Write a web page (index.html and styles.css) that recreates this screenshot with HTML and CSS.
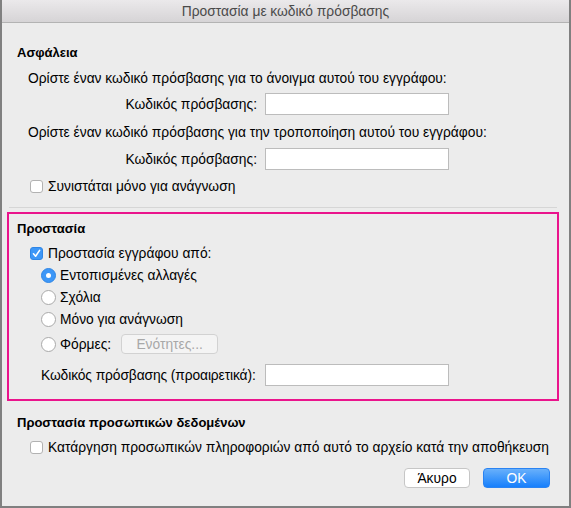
FILE: index.html
```html
<!DOCTYPE html>
<html lang="el">
<head>
  <meta charset="UTF-8" />
  <meta name="viewport" content="width=device-width, initial-scale=1.0" />
  <title>Προστασία με κωδικό πρόσβασης</title>
  <link rel="stylesheet" href="styles.css">
</head>
<body>
  <div class="window">
    <div class="titlebar">Προστασία με κωδικό πρόσβασης</div>

    <div class="content">
      <div class="heading first">Ασφάλεια</div>
      <div class="line indent">Ορίστε έναν κωδικό πρόσβασης για το άνοιγμα αυτού του εγγράφου:</div>
      <div class="pwd-row">
        <label class="pwd-label">Κωδικός πρόσβασης:</label>
        <input class="field" type="password" />
      </div>
      <div class="line indent second">Ορίστε έναν κωδικό πρόσβασης για την τροποποίηση αυτού του εγγράφου:</div>
      <div class="pwd-row pwd-second">
        <label class="pwd-label">Κωδικός πρόσβασης:</label>
        <input class="field" type="password" />
      </div>
      <div class="check-row readonly">
        <span class="checkbox"></span>
        <span>Συνιστάται μόνο για ανάγνωση</span>
      </div>

      <div class="separator"></div>

      <div class="highlight">
        <div class="heading">Προστασία</div>
        <div class="check-row protect">
          <span class="checkbox checked">
            <svg width="11" height="11" viewBox="0 0 11 11"><path d="M2.5 5.8 L4.6 8.2 L8.6 2.4" fill="none" stroke="#fff" stroke-width="1.6" stroke-linecap="round" stroke-linejoin="round"/></svg>
          </span>
          <span>Προστασία εγγράφου από:</span>
        </div>
        <div class="radio-row">
          <span class="radio selected"></span>
          <span>Εντοπισμένες αλλαγές</span>
        </div>
        <div class="radio-row">
          <span class="radio"></span>
          <span>Σχόλια</span>
        </div>
        <div class="radio-row">
          <span class="radio"></span>
          <span>Μόνο για ανάγνωση</span>
        </div>
        <div class="radio-row forms">
          <span class="radio"></span>
          <span>Φόρμες:</span>
          <button class="sections-btn" disabled>Ενότητες...</button>
        </div>
        <div class="pwd-row optional">
          <label class="pwd-label left">Κωδικός πρόσβασης (προαιρετικά):</label>
          <input class="field" type="password" />
        </div>
      </div>

      <div class="heading privacy">Προστασία προσωπικών δεδομένων</div>
      <div class="check-row">
        <span class="checkbox"></span>
        <span>Κατάργηση προσωπικών πληροφοριών από αυτό το αρχείο κατά την αποθήκευση</span>
      </div>

      <div class="actions">
        <button class="btn cancel">Άκυρο</button>
        <button class="btn ok">OK</button>
      </div>
    </div>
  </div>
</body>
</html>
```

FILE: styles.css
```css
body {
  margin: 0;
  font-family: "Liberation Sans", Arial, sans-serif;
  font-size: 13.8px;
  color: #000;
  background: #ececec;
}
.window {
  width: 571px;
  height: 508px;
  box-sizing: border-box;
  border: 2px solid #808080;
  border-top: none;
  background: #ececec;
}
.titlebar {
  height: 22px;
  line-height: 23px;
  text-align: center;
  color: #4a4a4a;
  background: linear-gradient(to bottom, #ebe9eb, #d6d4d6);
  border-bottom: 1px solid #b3b3b3;
}
.content {
  padding: 0 17px 0 15px;
}
.heading {
  height: 20px;
  line-height: 20px;
  font-size: 13px;
  font-weight: bold;
}
.heading.first {
  margin-top: 20px;
}
.line {
  height: 20px;
  line-height: 20px;
  margin-top: 6px;
}
.line.second {
  margin-top: 8px;
}
.indent {
  padding-left: 11px;
}
.pwd-row {
  display: flex;
  align-items: center;
  height: 22px;
  margin-top: 4px;
}
.pwd-row.pwd-second {
  margin-top: 5px;
}
.pwd-label {
  flex: none;
  width: 240px;
  text-align: right;
  margin-right: 8px;
  white-space: nowrap;
}
.pwd-label.left {
  text-align: left;
  padding-left: 24px;
  box-sizing: border-box;
  letter-spacing: -0.1px;
}
.field {
  flex: none;
  width: 184px;
  height: 22px;
  box-sizing: border-box;
  border: 1px solid #bcbcbc;
  background: #fff;
  margin: 0;
  padding: 0 4px;
}
.check-row {
  display: flex;
  align-items: center;
  height: 20px;
  margin-top: 4px;
  padding-left: 13px;
}
.check-row.readonly {
  margin-top: 6px;
}
.checkbox {
  width: 13px;
  height: 13px;
  box-sizing: border-box;
  border: 1px solid #b2b2b2;
  border-radius: 3px;
  background: #fff;
  margin-right: 5px;
  display: flex;
  align-items: center;
  justify-content: center;
}
.checkbox.checked {
  background: #3d97f7;
  border-color: #2f86e6;
}
.separator {
  height: 1px;
  background: #d6d6d6;
  margin: 11px -5px 0 -8px;
}
.highlight {
  margin: 4px -7px 0 -10px;
  border: 2px solid #ea148c;
  padding: 5px 5px 13px 8px;
}
.check-row.protect {
  margin-top: 4px;
}
.radio-row {
  display: flex;
  align-items: center;
  height: 22px;
  padding-left: 24px;
}
.check-row.protect + .radio-row {
  margin-top: 1px;
}
.radio-row.forms {
  margin-top: 3px;
}
.radio {
  width: 15px;
  height: 15px;
  box-sizing: border-box;
  border: 1px solid #a9a9a9;
  border-radius: 50%;
  background: #fff;
  margin-right: 4px;
  position: relative;
}
.radio.selected {
  background: #3d97f7;
  border-color: #2f86e6;
}
.radio.selected::after {
  content: "";
  position: absolute;
  left: 4px;
  top: 4px;
  width: 5px;
  height: 5px;
  border-radius: 50%;
  background: #fff;
}
.sections-btn {
  margin-left: 10px;
  width: 97px;
  height: 20px;
  font-family: inherit;
  font-size: 13.8px;
  color: #a8a8a8;
  background: #f4f4f4;
  border: 1px solid #d2d2d2;
  border-radius: 4px;
  padding: 0;
}
.pwd-row.optional {
  margin-top: 9px;
}
.heading.privacy {
  margin-top: 12px;
}
.actions {
  display: flex;
  justify-content: flex-end;
  gap: 13px;
  margin-top: 11px;
  margin-right: 2px;
}
.btn {
  height: 20px;
  width: 66px;
  font-family: inherit;
  font-size: 13.8px;
  border-radius: 4px;
  padding: 0;
}
.btn.cancel {
  background: #fff;
  border: 1px solid #c6c6c6;
  color: #000;
}
.btn.ok {
  width: 67px;
  color: #fff;
  border: 1px solid #2a83f2;
  background: linear-gradient(to bottom, #68b0fb, #167ffc);
}
```
